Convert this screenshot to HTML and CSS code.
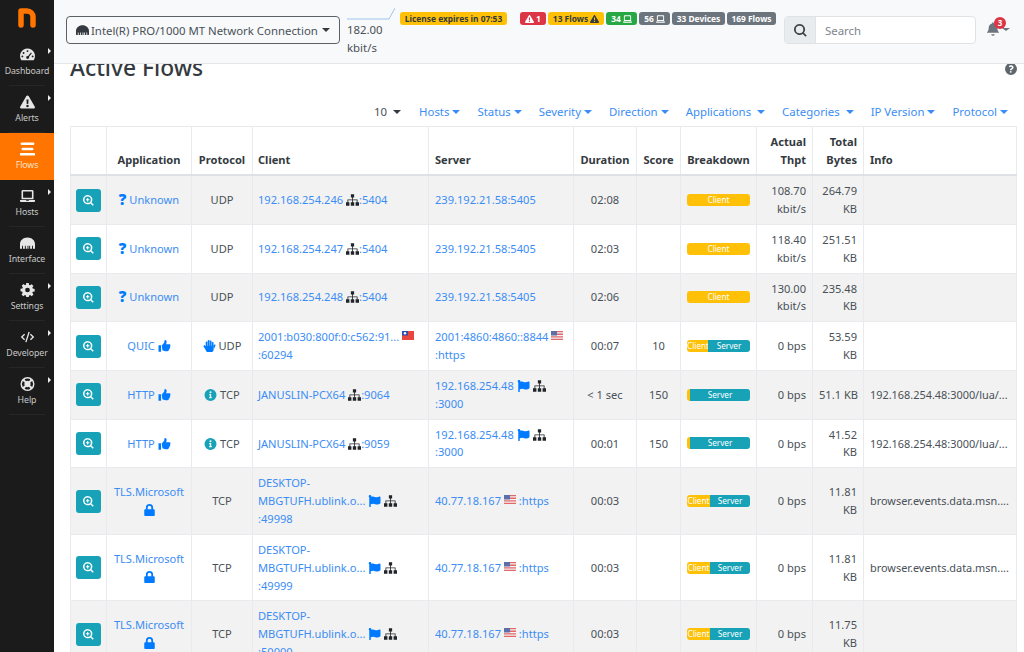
FILE: index.html
```html
<!DOCTYPE html>
<html lang="en">
<head>
<meta charset="utf-8">
<title>Active Flows</title>
<link rel="stylesheet" href="styles.css">
</head>
<body>
<svg class="defs" aria-hidden="true">
<symbol id="flag" viewBox="0 0 512 512"><path d="M349.565 98.783C295.978 98.783 251.721 64 184.348 64c-24.955 0-47.309 4.384-68.045 12.013a55.947 55.947 0 0 0 3.586-23.562C118.117 24.015 94.806 1.206 66.338.048 34.345-1.254 8 24.296 8 56c0 19.026 9.497 35.825 24 45.945V488c0 13.255 10.745 24 24 24h16c13.255 0 24-10.745 24-24v-94.4c28.311-12.064 63.582-22.122 114.435-22.122 53.588 0 97.844 34.783 165.217 34.783 48.169 0 86.667-16.294 122.505-40.858C506.84 359.452 512 349.571 512 339.045v-243.1c0-23.393-24.269-38.87-45.485-29.016-34.338 15.948-76.454 31.854-116.95 31.854z"/></symbol>
<symbol id="sitemap" viewBox="0 0 16 14"><path d="M6 0h4v3.800H6zM7.500 3.800h1v2.500h5.700v3.400h-1V7.300H8.500v2.400h-1V7.300H2.800v2.400h-1V6.300h5.700zM0 9.700h4.200V14H0zM5.900 9.700h4.200V14H5.900zM11.800 9.700H16V14h-4.200z"/></symbol>
<symbol id="zoom" viewBox="0 0 16 16"><path fill-rule="evenodd" d="M6.800 0a6.800 6.800 0 0 1 5.500 10.800l3.400 3.400-1.500 1.500-3.400-3.400A6.800 6.800 0 1 1 6.800 0zm0 2.200a4.600 4.600 0 1 0 0 9.200 4.600 4.600 0 0 0 0-9.200zM6 4.300h1.600V6h1.700v1.600H7.600v1.700H6V7.600H4.300V6H6z"/></symbol>
<symbol id="thumb" viewBox="0 0 16 16"><path d="M0 7h3.400v8.600H0zM4.400 7.200 7.200 4c.6-.8.6-1.700.6-2.800 0-.8.500-1.200 1.100-1.200 1.300 0 2 1.300 2 2.800 0 1-.4 1.900-.8 2.700h4.300c1 0 1.600.7 1.600 1.600 0 .6-.3 1-.6 1.300.3.400.4.800.3 1.300-.1.500-.4.900-.8 1.100.1.500 0 1-.3 1.400-.2.300-.5.500-.8.600.1.500 0 .9-.2 1.200-.4.600-1 .9-1.800.9h-2c-1.500 0-2.700-.5-3.600-.9l-1-.4z"/></symbol>
<symbol id="hand" viewBox="0 0 16 16"><rect x="3" y="2" width="2.300" height="9" rx="1.100"/><rect x="5.700" y="0" width="2.300" height="9" rx="1.100"/><rect x="8.400" y="0.800" width="2.300" height="9" rx="1.100"/><rect x="11.100" y="2.600" width="2.300" height="8" rx="1.100"/><rect x="3" y="7.500" width="10.400" height="8.500" rx="3.500"/><path d="M.3 7.300c.6-.6 1.500-.6 2 0L4.500 10l-1.200 3.600L.2 9c-.3-.5-.3-1.200.1-1.700z"/><path d="M13 8l.9-1.500c.4-.6 1.100-.8 1.600-.5.5.3.700 1 .4 1.600l-2 4.400z"/></symbol>
<symbol id="info" viewBox="0 0 16 16"><path fill-rule="evenodd" d="M8 0a8 8 0 1 1 0 16A8 8 0 0 1 8 0zm0 3a1.400 1.400 0 1 0 0 2.800A1.400 1.400 0 0 0 8 3zM6.300 6.800v1.500h.8v2.500h-.8v1.500h3.400v-1.500h-.8v-4z"/></symbol>
<symbol id="lock" viewBox="0 0 14 16"><path fill-rule="evenodd" d="M7 0a4.800 4.800 0 0 1 4.800 4.800V7h.7c.8 0 1.500.7 1.500 1.500v6c0 .8-.7 1.500-1.500 1.500h-11C.7 16 0 15.300 0 14.500v-6C0 7.700.7 7 1.500 7h.7V4.800A4.800 4.800 0 0 1 7 0zm0 2.400a2.400 2.400 0 0 0-2.400 2.400V7h4.800V4.800A2.400 2.400 0 0 0 7 2.400z"/></symbol>
<symbol id="warn" viewBox="0 0 16 14"><path fill-rule="evenodd" d="M8 0c.5 0 .9.300 1.200.7l6.600 11.300c.5.900-.1 2-1.200 2H1.400c-1.100 0-1.700-1.100-1.200-2L6.800.7C7.100.3 7.500 0 8 0zM6.900 4.200l.3 4.900h1.600l.3-4.900zM8 9.900a1.300 1.300 0 1 0 0 2.600 1.300 1.300 0 0 0 0-2.600z"/></symbol>
<symbol id="laptop" viewBox="0 0 16 13"><path fill-rule="evenodd" d="M3 0h10c.8 0 1.400.6 1.400 1.400V10H1.600V1.400C1.600.6 2.200 0 3 0zm.3 1.700v6.600h9.400V1.700zM0 10.800h6.300c0 .4.300.7.700.7h2c.4 0 .7-.3.700-.7H16v.9c0 .7-.6 1.300-1.300 1.300H1.300C.6 13 0 12.400 0 11.700z"/></symbol>
<symbol id="eth" viewBox="0 0 16 12"><path d="M0 12V7c0-4 3.500-7 8-7s8 3 8 7v5h-2.200V9h-1v3h-2V9h-1v3H9V9H8v3H6.200V9h-1v3h-2V9h-1v3z"/></symbol>
<symbol id="gauge" viewBox="0 0 16 14"><path fill-rule="evenodd" d="M8 0a8 8 0 0 1 6.900 12c-.2.400-.6.600-1 .6H2.100c-.4 0-.8-.2-1-.6A8 8 0 0 1 8 0zm0 1.800a1 1 0 1 0 0 2 1 1 0 0 0 0-2zM3.800 3.800a1 1 0 1 0 0 2 1 1 0 0 0 0-2zM2.500 7.500a1 1 0 1 0 0 2 1 1 0 0 0 0-2zm11 0a1 1 0 1 0 0 2 1 1 0 0 0 0-2zM11.700 4.300 8.500 8.200a1.500 1.500 0 1 0 1 .8l3.100-4z"/></symbol>
<symbol id="bars" viewBox="0 0 16 14"><path d="M2 0h12a1.200 1.200 0 0 1 0 2.800H2A1.200 1.200 0 0 1 2 0zM3 5.600h10a1.200 1.200 0 0 1 0 2.800H3a1.200 1.200 0 0 1 0-2.800zM1 11.200h14a1.200 1.200 0 0 1 0 2.800H1a1.200 1.200 0 0 1 0-2.800z"/></symbol>
<symbol id="cog" viewBox="0 0 16 16"><path fill-rule="evenodd" d="M6.600 0h2.800l.4 2.200 1.200.5 1.800-1.300 2 2-1.300 1.800.5 1.200 2.200.4v2.800l-2.200.4-.5 1.200 1.300 1.800-2 2-1.800-1.300-1.200.5-.4 2.200H6.600l-.4-2.200-1.200-.5-1.800 1.300-2-2 1.300-1.800-.5-1.200L0 9.400V6.600l2.200-.4.500-1.200-1.300-1.800 2-2L5.200 2.500l1-.5zM8 5.300a2.700 2.700 0 1 0 0 5.400 2.700 2.700 0 0 0 0-5.400z"/></symbol>
<symbol id="code" viewBox="0 0 20 14"><path d="M11.300 0l1.700.5-4.300 13.500-1.700-.5zM5.500 2.700l1.300 1.300L3.600 7l3.200 3-1.300 1.300L1 7zM14.500 2.700 19 7l-4.500 4.300-1.300-1.300 3.200-3-3.200-3z"/></symbol>
<symbol id="ring" viewBox="0 0 16 16"><path fill-rule="evenodd" d="M8 0a8 8 0 1 1 0 16A8 8 0 0 1 8 0zM4.700 2.600 6.200 4.900a3.600 3.600 0 0 1 3.600 0l1.500-2.300a6.400 6.400 0 0 0-6.600 0zM2.600 4.700a6.400 6.400 0 0 0 0 6.600l2.300-1.500a3.600 3.600 0 0 1 0-3.600zm10.800 0-2.300 1.500a3.600 3.600 0 0 1 0 3.600l2.300 1.500a6.400 6.400 0 0 0 0-6.600zM6.200 11.100l-1.500 2.300a6.400 6.400 0 0 0 6.600 0l-1.500-2.300a3.600 3.600 0 0 1-3.600 0z"/></symbol>
<symbol id="search" viewBox="0 0 16 16"><path fill-rule="evenodd" d="M6.800 0a6.800 6.800 0 0 1 5.500 10.800l3.400 3.400-1.500 1.500-3.400-3.400A6.800 6.800 0 1 1 6.800 0zm0 2.200a4.600 4.600 0 1 0 0 9.200 4.600 4.600 0 0 0 0-9.200z"/></symbol>
<symbol id="bell" viewBox="0 0 14 16"><path d="M7 0c.6 0 1 .4 1 1v.7c2.300.4 4 2.400 4 4.800 0 3.300 1.300 4.500 2 5.200.2.200.200.800-.4.800H.4c-.6 0-.6-.6-.4-.800.7-.7 2-1.900 2-5.200 0-2.400 1.700-4.400 4-4.800V1c0-.6.400-1 1-1zM5 14h4a2 2 0 0 1-4 0z"/></symbol>
<symbol id="qcircle" viewBox="0 0 16 16"><path fill-rule="evenodd" d="M8 0a8 8 0 1 1 0 16A8 8 0 0 1 8 0zm.2 3C6.600 3 5.600 3.700 4.900 4.800l1.400 1c.4-.5.800-.9 1.700-.9.700 0 1.300.4 1.300 1 0 .5-.4.700-1 1-.8.500-1.600 1-1.600 2.200v.4h2v-.2c0-.5.400-.7 1-1.100.9-.5 1.700-1.100 1.700-2.300C11.400 4 9.900 3 8.200 3zM7.700 10.600a1.200 1.200 0 1 0 0 2.400 1.200 1.200 0 0 0 0-2.400z"/></symbol>
<symbol id="tw" viewBox="0 0 12 9"><rect width="12" height="9" fill="#e8463f"/><rect width="6" height="4.500" fill="#2f4fa8"/><circle cx="3" cy="2.250" r="1.200" fill="#fff"/></symbol>
<symbol id="us" viewBox="0 0 12 9"><rect width="12" height="9" fill="#f3f3f3"/><path d="M0 0h12v1.300H0zM0 2.600h12v1.300H0zM0 5.200h12v1.300H0zM0 7.700h12V9H0z" fill="#e2686a"/><rect width="6" height="4.500" fill="#5d6ea8"/></symbol>
</svg>

<aside class="side">
  <svg class="logo" viewBox="0 0 18 20"><path d="M3 17V3h6a6 6 0 0 1 6 6v8" fill="none" stroke="#ff7500" stroke-width="5.500" stroke-linecap="round" stroke-linejoin="round"/></svg>
  <a class="nav-item arrow"><svg class="ni"><use href="#gauge"/></svg><span>Dashboard</span></a>
  <a class="nav-item arrow"><svg class="ni"><use href="#warn"/></svg><span>Alerts</span></a>
  <a class="nav-item active"><svg class="ni"><use href="#bars"/></svg><span>Flows</span></a>
  <a class="nav-item arrow"><svg class="ni"><use href="#laptop"/></svg><span>Hosts</span></a>
  <a class="nav-item"><svg class="ni"><use href="#eth"/></svg><span>Interface</span></a>
  <a class="nav-item arrow"><svg class="ni"><use href="#cog"/></svg><span>Settings</span></a>
  <a class="nav-item arrow"><svg class="ni"><use href="#code"/></svg><span>Developer</span></a>
  <a class="nav-item arrow"><svg class="ni"><use href="#ring"/></svg><span>Help</span></a>
</aside>

<div class="main">
  <header class="top">
    <button class="ifsel"><svg class="ifi"><use href="#eth"/></svg><span>Intel(R) PRO/1000 MT Network Connection</span><i class="caret dark"></i></button>
    <div class="traffic">
      <svg class="spark" viewBox="0 0 48 20"><path d="M0 19H42L48 8" fill="none" stroke="#9fc5ee" stroke-width="1"/></svg>
      <div class="rate">182.00<br>kbit/s</div>
    </div>
    <span class="pill yellow lic">License expires in 07:53</span>
    <div class="pills">
      <span class="pill red"><svg class="pi"><use href="#warn"/></svg> 1</span>
      <span class="pill yellow">13 Flows <svg class="pi"><use href="#warn"/></svg></span>
      <span class="pill green">34 <svg class="pi"><use href="#laptop"/></svg></span>
      <span class="pill gray">56 <svg class="pi"><use href="#laptop"/></svg></span>
      <span class="pill gray">33 Devices</span>
      <span class="pill gray">169 Flows</span>
    </div>
    <div class="search">
      <span class="addon"><svg class="si"><use href="#search"/></svg></span>
      <span class="field">Search</span>
    </div>
    <div class="bellbox">
      <svg class="bell"><use href="#bell"/></svg><span class="bellcount">3</span><i class="caret grey"></i>
    </div>
  </header>

  <section class="content">
    <div class="title-row">
      <h2>Active Flows</h2>
      <svg class="help"><use href="#qcircle"/></svg>
    </div>
    <div class="filters">
      <span class="flt plain">10<i class="caret dark wide"></i></span>
      <a class="flt">Hosts<i class="caret"></i></a>
      <a class="flt">Status<i class="caret"></i></a>
      <a class="flt">Severity<i class="caret"></i></a>
      <a class="flt">Direction<i class="caret"></i></a>
      <a class="flt">Applications<i class="caret wide"></i></a>
      <a class="flt">Categories<i class="caret wide"></i></a>
      <a class="flt">IP Version<i class="caret"></i></a>
      <a class="flt">Protocol<i class="caret"></i></a>
    </div>
    <table class="flows">
      <colgroup>
        <col class="c1"><col class="c2"><col class="c3"><col class="c4"><col class="c5"><col class="c6"><col class="c7"><col class="c8"><col class="c9"><col class="c10"><col class="c11">
      </colgroup>
      <thead>
        <tr><th></th><th class="ctr">Application</th><th class="ctr">Protocol</th><th>Client</th><th>Server</th><th class="ctr">Duration</th><th class="ctr">Score</th><th class="ctr">Breakdown</th><th class="rgt">Actual Thpt</th><th class="rgt">Total Bytes</th><th>Info</th></tr>
      </thead>
      <tbody>
        <tr>
          <td><a class="btn"><svg class="bi"><use href="#zoom"/></svg></a></td>
          <td class="ctr"><a><b class="q">?</b> Unknown</a></td><td class="ctr">UDP</td>
          <td><a>192.168.254.246</a> <svg class="i ink"><use href="#sitemap"/></svg><a>:5404</a></td>
          <td><a>239.192.21.58:5405</a></td><td class="ctr">02:08</td><td class="ctr"></td>
          <td><div class="bar"><span class="cl full">Client</span></div></td>
          <td class="rgt">108.70 kbit/s</td><td class="rgt">264.79 KB</td><td></td>
        </tr>
        <tr>
          <td><a class="btn"><svg class="bi"><use href="#zoom"/></svg></a></td>
          <td class="ctr"><a><b class="q">?</b> Unknown</a></td><td class="ctr">UDP</td>
          <td><a>192.168.254.247</a> <svg class="i ink"><use href="#sitemap"/></svg><a>:5404</a></td>
          <td><a>239.192.21.58:5405</a></td><td class="ctr">02:03</td><td class="ctr"></td>
          <td><div class="bar"><span class="cl full">Client</span></div></td>
          <td class="rgt">118.40 kbit/s</td><td class="rgt">251.51 KB</td><td></td>
        </tr>
        <tr>
          <td><a class="btn"><svg class="bi"><use href="#zoom"/></svg></a></td>
          <td class="ctr"><a><b class="q">?</b> Unknown</a></td><td class="ctr">UDP</td>
          <td><a>192.168.254.248</a> <svg class="i ink"><use href="#sitemap"/></svg><a>:5404</a></td>
          <td><a>239.192.21.58:5405</a></td><td class="ctr">02:06</td><td class="ctr"></td>
          <td><div class="bar"><span class="cl full">Client</span></div></td>
          <td class="rgt">130.00 kbit/s</td><td class="rgt">235.48 KB</td><td></td>
        </tr>
        <tr>
          <td><a class="btn"><svg class="bi"><use href="#zoom"/></svg></a></td>
          <td class="ctr"><a>QUIC <svg class="i blue"><use href="#thumb"/></svg></a></td>
          <td class="ctr"><svg class="i blue"><use href="#hand"/></svg> UDP</td>
          <td><a>2001:b030:800f:0:c562:91...</a> <svg class="fl"><use href="#tw"/></svg><br><a>:60294</a></td>
          <td><a>2001:4860:4860::8844</a> <svg class="fl"><use href="#us"/></svg><br><a>:https</a></td>
          <td class="ctr">00:07</td><td class="ctr">10</td>
          <td><div class="bar"><span class="cl w21">Client</span><span class="sv">Server</span></div></td>
          <td class="rgt">0 bps</td><td class="rgt">53.59 KB</td><td></td>
        </tr>
        <tr>
          <td><a class="btn"><svg class="bi"><use href="#zoom"/></svg></a></td>
          <td class="ctr"><a>HTTP <svg class="i blue"><use href="#thumb"/></svg></a></td>
          <td class="ctr"><svg class="i teal"><use href="#info"/></svg> TCP</td>
          <td><a>JANUSLIN-PCX64</a> <svg class="i ink"><use href="#sitemap"/></svg><a>:9064</a></td>
          <td><a>192.168.254.48</a> <svg class="i blue"><use href="#flag"/></svg> <svg class="i ink"><use href="#sitemap"/></svg><br><a>:3000</a></td>
          <td class="ctr">&lt; 1 sec</td><td class="ctr">150</td>
          <td><div class="bar"><span class="cl w3"></span><span class="sv">Server</span></div></td>
          <td class="rgt">0 bps</td><td class="rgt nw">51.1 KB</td><td class="clip">192.168.254.48:3000/lua/...</td>
        </tr>
        <tr>
          <td><a class="btn"><svg class="bi"><use href="#zoom"/></svg></a></td>
          <td class="ctr"><a>HTTP <svg class="i blue"><use href="#thumb"/></svg></a></td>
          <td class="ctr"><svg class="i teal"><use href="#info"/></svg> TCP</td>
          <td><a>JANUSLIN-PCX64</a> <svg class="i ink"><use href="#sitemap"/></svg><a>:9059</a></td>
          <td><a>192.168.254.48</a> <svg class="i blue"><use href="#flag"/></svg> <svg class="i ink"><use href="#sitemap"/></svg><br><a>:3000</a></td>
          <td class="ctr">00:01</td><td class="ctr">150</td>
          <td><div class="bar"><span class="cl w3"></span><span class="sv">Server</span></div></td>
          <td class="rgt">0 bps</td><td class="rgt">41.52 KB</td><td class="clip">192.168.254.48:3000/lua/...</td>
        </tr>
        <tr>
          <td><a class="btn"><svg class="bi"><use href="#zoom"/></svg></a></td>
          <td class="ctr"><a>TLS.Microsoft<br><svg class="i blue"><use href="#lock"/></svg></a></td>
          <td class="ctr">TCP</td>
          <td><a>DESKTOP-<br>MBGTUFH.ublink.o...</a> <svg class="i blue"><use href="#flag"/></svg> <svg class="i ink"><use href="#sitemap"/></svg><br><a>:49998</a></td>
          <td><a>40.77.18.167</a> <svg class="fl"><use href="#us"/></svg> <a>:https</a></td>
          <td class="ctr">00:03</td><td class="ctr"></td>
          <td><div class="bar"><span class="cl w23">Client</span><span class="sv">Server</span></div></td>
          <td class="rgt">0 bps</td><td class="rgt">11.81 KB</td><td class="clip">browser.events.data.msn....</td>
        </tr>
        <tr>
          <td><a class="btn"><svg class="bi"><use href="#zoom"/></svg></a></td>
          <td class="ctr"><a>TLS.Microsoft<br><svg class="i blue"><use href="#lock"/></svg></a></td>
          <td class="ctr">TCP</td>
          <td><a>DESKTOP-<br>MBGTUFH.ublink.o...</a> <svg class="i blue"><use href="#flag"/></svg> <svg class="i ink"><use href="#sitemap"/></svg><br><a>:49999</a></td>
          <td><a>40.77.18.167</a> <svg class="fl"><use href="#us"/></svg> <a>:https</a></td>
          <td class="ctr">00:03</td><td class="ctr"></td>
          <td><div class="bar"><span class="cl w23">Client</span><span class="sv">Server</span></div></td>
          <td class="rgt">0 bps</td><td class="rgt">11.81 KB</td><td class="clip">browser.events.data.msn....</td>
        </tr>
        <tr>
          <td><a class="btn"><svg class="bi"><use href="#zoom"/></svg></a></td>
          <td class="ctr"><a>TLS.Microsoft<br><svg class="i blue"><use href="#lock"/></svg></a></td>
          <td class="ctr">TCP</td>
          <td><a>DESKTOP-<br>MBGTUFH.ublink.o...</a> <svg class="i blue"><use href="#flag"/></svg> <svg class="i ink"><use href="#sitemap"/></svg><br><a>:50000</a></td>
          <td><a>40.77.18.167</a> <svg class="fl"><use href="#us"/></svg> <a>:https</a></td>
          <td class="ctr">00:03</td><td class="ctr"></td>
          <td><div class="bar"><span class="cl w23">Client</span><span class="sv">Server</span></div></td>
          <td class="rgt">0 bps</td><td class="rgt">11.75 KB</td><td></td>
        </tr>
      </tbody>
    </table>
  </section>
</div>
</body>
</html>
```

FILE: styles.css
```css
* { box-sizing: border-box; }
html, body { margin: 0; height: 652px; overflow: hidden; }
body {
  display: flex;
  font-family: "Noto Sans", "Open Sans", sans-serif;
  font-size: 11.1px;
  line-height: 17.85px;
  color: #495057;
  background: #fff;
}
a { color: #3b8df5; text-decoration: none; }
.defs { position: absolute; width: 0; height: 0; }

/* sidebar */
.side {
  width: 54px;
  flex: none;
  height: 652px;
  background: #1b1b1b;
  display: flex;
  flex-direction: column;
}
.logo { width: 18px; height: 20px; margin: 8px 0 11px 18px; flex: none; }
.nav-item {
  position: relative;
  height: 47px;
  flex: none;
  display: flex;
  flex-direction: column;
  align-items: center;
  padding-top: 9px;
  color: #c8c8c8;
  font-size: 8.8px;
  line-height: 14px;
  letter-spacing: -0.1px;
}
.nav-item span { margin-top: 1px; }
.ni { width: 15px; height: 14px; fill: #e6e6e6; margin-bottom: 1px; }
.nav-item.active { background: #ff7500; color: #ffe1c4; }
.nav-item.active .ni { fill: #fff; }
.nav-item::before {
  content: "";
  position: absolute;
  left: 9px;
  right: 9px;
  bottom: 0;
  border-bottom: 1px solid #262626;
}
.nav-item.active::before { display: none; }
.nav-item.arrow::after {
  content: "";
  position: absolute;
  left: 48px;
  top: 9px;
  border-left: 3px solid #eee;
  border-top: 3px solid transparent;
  border-bottom: 3px solid transparent;
}

/* top bar */
.main { flex: 1; min-width: 0; height: 652px; display: flex; flex-direction: column; overflow: hidden; }
.top {
  height: 64px;
  flex: none;
  display: flex;
  align-items: flex-start;
  background: #f8f9fa;
  border-bottom: 1px solid #e4e6e8;
  padding-left: 12px;
}
.ifsel {
  width: 274px;
  height: 28px;
  margin-top: 16px;
  padding: 0 0 0 9px;
  display: flex;
  align-items: center;
  border: 1px solid #5a6268;
  border-radius: 4px;
  background: #f8f9fa;
  color: #495057;
  font: 11.4px "Noto Sans", sans-serif;
  white-space: nowrap;
  flex: none;
}
.ifi { width: 13px; height: 10px; fill: #343a40; margin-right: 2px; flex: none; }
.caret {
  display: inline-block;
  width: 0;
  height: 0;
  margin-left: 3px;
  vertical-align: 2px;
  border-top: 4px solid #3b8df5;
  border-left: 4px solid transparent;
  border-right: 4px solid transparent;
}
.caret.wide { margin-left: 6px; }
.caret.dark { border-top-color: #343a40; }
.caret.grey { border-top-color: #6c757d; }
.ifsel .caret { margin-left: 4px; }
.traffic { width: 53px; margin-left: 7px; flex: none; }
.spark { display: block; width: 48px; height: 20px; }
.rate { font-size: 11.4px; line-height: 18px; margin-top: 1px; }
.pill {
  display: inline-flex;
  align-items: center;
  justify-content: center;
  gap: 2px;
  height: 13px;
  padding: 0 4px;
  border-radius: 3px;
  font-size: 8.4px;
  font-weight: 700;
  line-height: 13px;
  white-space: nowrap;
}
.pi { width: 9px; height: 8px; fill: currentColor; }
.lic { width: 107px; margin-top: 12px; flex: none; }
.pills { display: flex; gap: 2px; margin: 12px 0 0 13px; width: 257px; flex: none; }
.pills .pill:nth-child(1) { width: 26px; }
.pills .pill:nth-child(2) { width: 56px; }
.pills .pill:nth-child(3) { width: 31px; }
.pills .pill:nth-child(4) { width: 31px; }
.pills .pill:nth-child(5) { width: 53px; }
.pills .pill:nth-child(6) { width: 49px; }
.yellow { background: #ffc107; color: #343a40; }
.red { background: #dc3545; color: #fff; }
.green { background: #28a745; color: #fff; }
.gray { background: #6c757d; color: #fff; }
.search {
  display: flex;
  width: 192px;
  height: 28px;
  margin: 16px 0 0 7px;
  border: 1px solid #dfe3e6;
  border-radius: 4px;
  overflow: hidden;
  flex: none;
  background: #fff;
}
.addon { width: 31px; background: #e9ecef; border-right: 1px solid #dfe3e6; display: flex; align-items: center; justify-content: center; }
.si { width: 13px; height: 13px; fill: #3f4549; }
.field { padding-left: 9px; line-height: 28px; color: #7d858c; font-size: 11.4px; }
.bellbox { position: relative; margin: 0 0 0 11px; width: 30px; height: 60px; flex: none; }
.bell { position: absolute; left: 0; top: 22px; width: 12px; height: 14px; fill: #6c757d; }
.bellcount {
  position: absolute;
  left: 7px;
  top: 17px;
  width: 12px;
  height: 12px;
  border-radius: 50%;
  background: #dc3545;
  color: #fff;
  font-size: 8px;
  font-weight: 700;
  line-height: 12px;
  text-align: center;
}
.bellbox .caret { position: absolute; left: 15px; top: 28px; margin: 0; border-top-width: 3px; }

/* content */
.content { flex: 1; min-height: 0; overflow: hidden; padding: 0 8px 0 16px; }
.title-row { display: flex; justify-content: space-between; align-items: flex-start; height: 47px; margin-top: -13px; margin-bottom: -2px; }
h2 { margin: 0; font-size: 22.8px; font-weight: 500; line-height: 34px; color: #343a40; }
.help { width: 12px; height: 12px; fill: #5f676e; margin: 12px -1px 0 0; }
.filters { display: flex; justify-content: flex-end; gap: 17px; height: 30px; padding: 7px 8px 0 0; align-items: flex-start; font-size: 11.4px; }
.flt.plain { color: #495057; margin-right: 1px; }

/* table */
.flows { width: 946px; table-layout: fixed; border-collapse: collapse; }
.c1 { width: 36px; } .c2 { width: 85px; } .c3 { width: 61px; } .c4 { width: 176px; }
.c5 { width: 145px; } .c6 { width: 63px; } .c7 { width: 44px; } .c8 { width: 76px; }
.c9 { width: 56px; } .c10 { width: 51px; } .c11 { width: 153px; }
.flows th, .flows td { border: 1px solid #e8eaed; padding: 6px; vertical-align: middle; }
.flows th:nth-child(4), .flows td:nth-child(4) { padding-left: 5px; }
.flows th { vertical-align: bottom; font-weight: 700; color: #343a40; text-align: left; border-bottom-width: 2px; border-bottom-color: #dee2e6; padding-bottom: 5.5px; }
.flows th.ctr { text-align: center; }
.flows th.rgt { text-align: right; }
.flows tbody tr:nth-child(odd) { background: #f2f2f2; }
.ctr { text-align: center; }
.rgt { text-align: right; }
.nw { white-space: nowrap; }
.clip { white-space: nowrap; overflow: hidden; font-size: 10.9px; color: #495057; }
.btn { width: 25px; height: 23px; border-radius: 3px; background: #17a2b8; margin-left: -1px; display: flex; align-items: center; justify-content: center; }
.bi { width: 11px; height: 11px; fill: #fff; }
.i { width: 13px; height: 12px; vertical-align: -2px; }
.blue { fill: #007bff; }
.ink { fill: #212529; }
.teal { fill: #17a2b8; }
.fl { width: 12px; height: 9px; vertical-align: 1px; }
.q { color: #007bff; font-size: 15px; font-weight: 900; line-height: 1; vertical-align: -1px; }
.bar { display: flex; height: 12px; border-radius: 3px; overflow: hidden; font-size: 8.2px; line-height: 12px; color: #fff; text-align: center; }
.cl { background: #ffc107; overflow: hidden; }
.sv { background: #17a2b8; flex: 1; }
.full { width: 100%; }
.w21 { width: 21px; }
.w3 { width: 3px; }
.w23 { width: 23px; }
```
